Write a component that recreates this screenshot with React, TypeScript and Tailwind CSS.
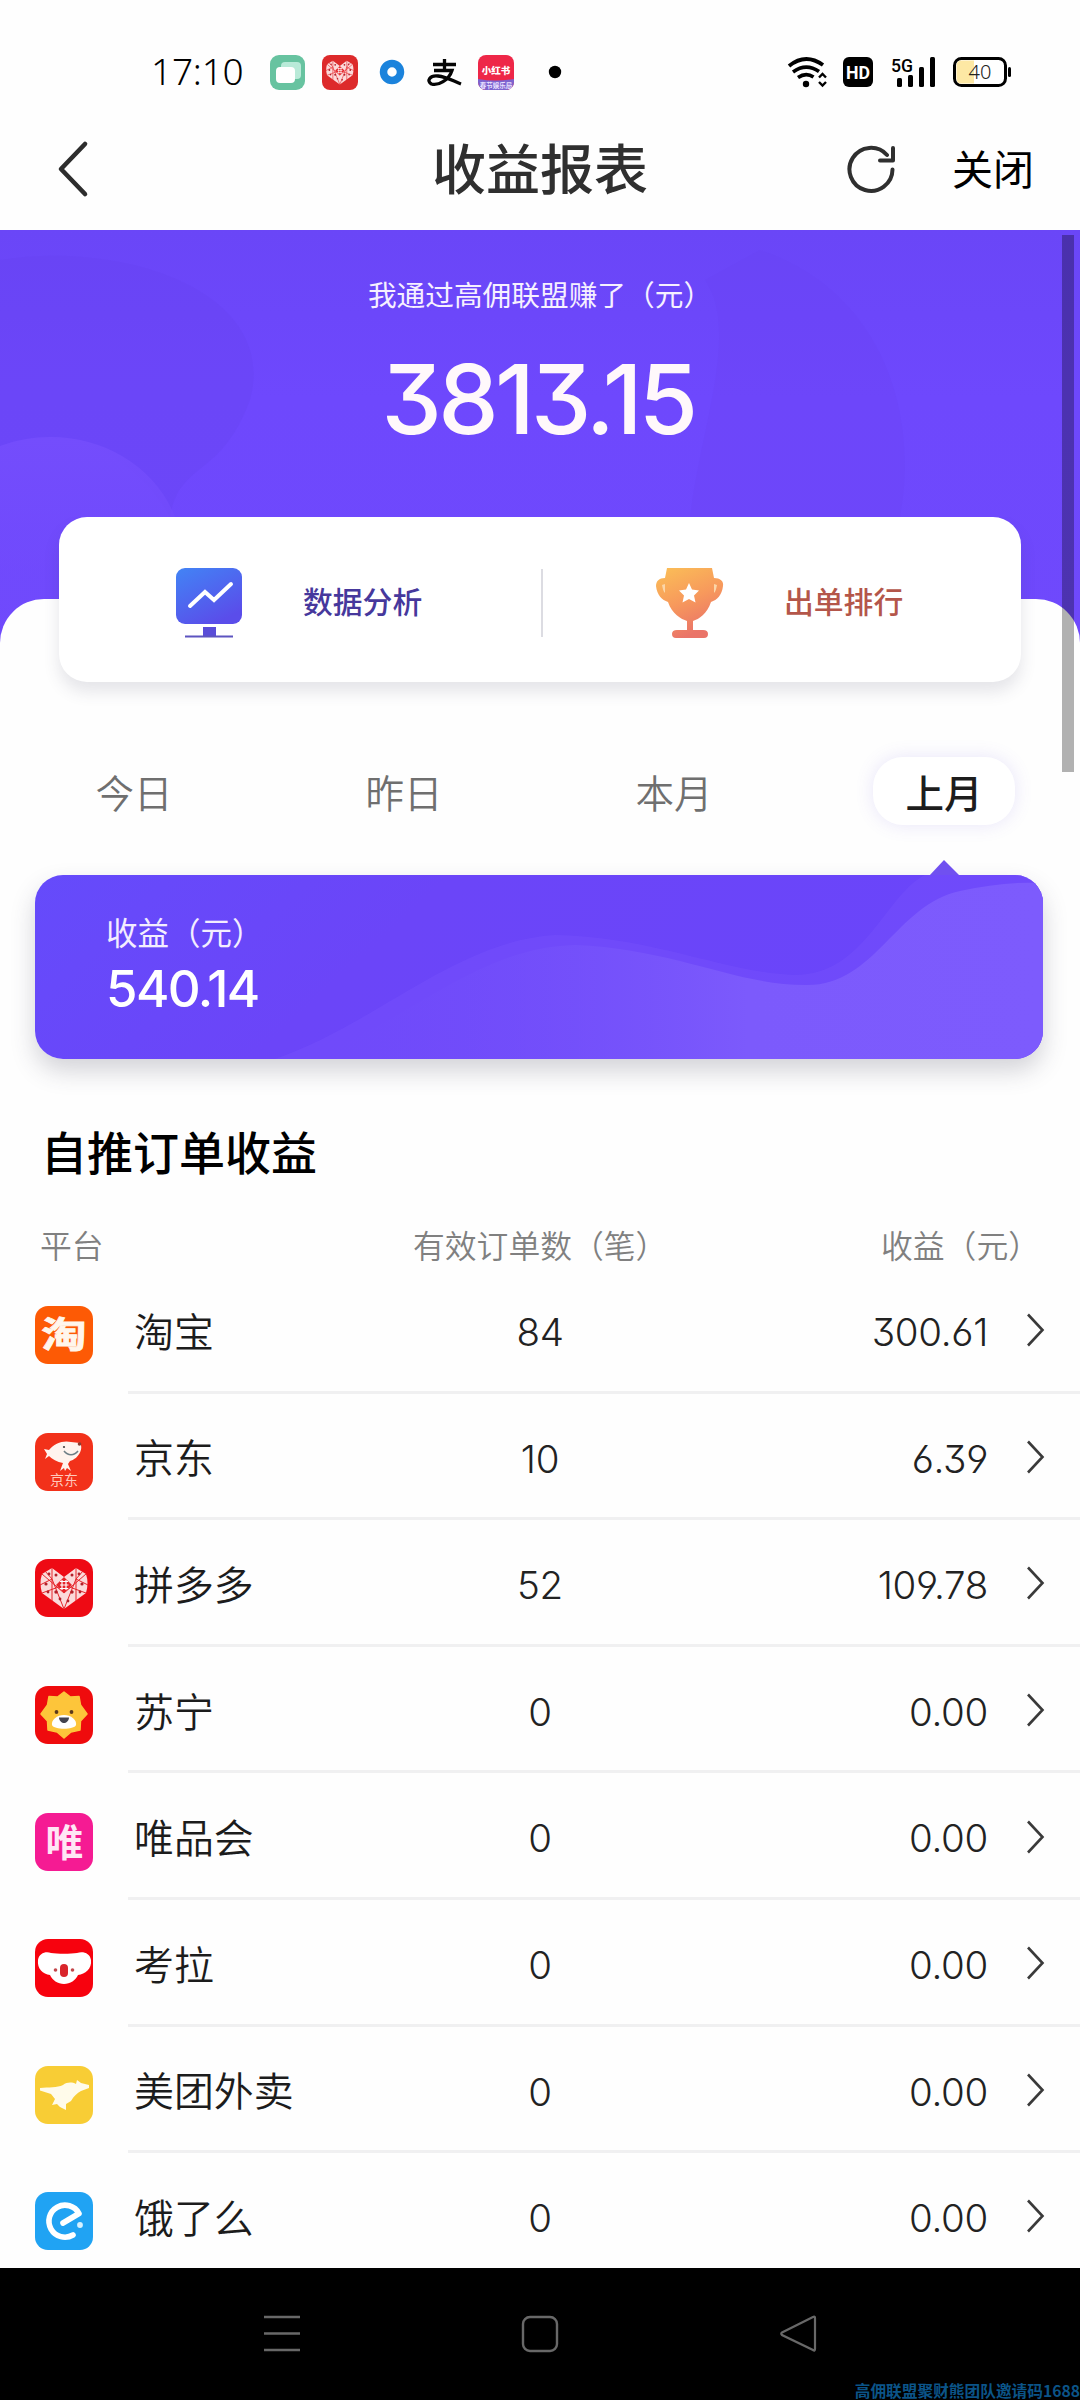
import type { ReactNode } from 'react'

interface Platform {
  name: string
  orders: string
  income: string
  icon: ReactNode
}

const NUM = "font-['Inter','Noto_Sans_CJK_SC',sans-serif] [font-feature-settings:'cv09','cv03','cv04']"

function PddHeart() {
  return (
    <g>
      <path d="M29 50 L7 34 Q4 24 7 15 L17 9 L29 18 L41 9 L51 15 Q54 24 51 34 Z" fill="#fbdada" />
      <path
        d="M7 15 L29 34 L51 15 M17 9 V42 M41 9 V42 M5 26 L17 20 L29 50 L41 20 L53 26 M7 34 L29 26 L51 34 M10 12 L17 20 M48 12 L41 20"
        stroke="#e5252a"
        strokeWidth="1"
        fill="none"
      />
      <g fill="#b3202a">
        <circle cx="11" cy="25" r="1.6" />
        <circle cx="14" cy="15" r="1.4" />
        <circle cx="21" cy="16" r="1.5" />
        <circle cx="37" cy="16" r="1.5" />
        <circle cx="44" cy="15" r="1.4" />
        <circle cx="47" cy="25" r="1.6" />
        <circle cx="13" cy="33" r="1.4" />
        <circle cx="45" cy="33" r="1.4" />
        <circle cx="21" cy="33" r="1.7" />
        <circle cx="37" cy="33" r="1.7" />
        <circle cx="25" cy="40" r="1.4" />
        <circle cx="33" cy="42" r="1.4" />
      </g>
      <path d="M29 18 L37 26 L29 34 L21 26 Z" fill="#e5252a" />
      <path d="M25 22.500 H33 M25 26 H33.500 M25 29.500 H33 M27 21 V31 M31 21 V31" stroke="#fff" strokeWidth="1.2" />
    </g>
  )
}

function AppIcon({ bg, children }: { bg: string; children: ReactNode }) {
  return (
    <svg width="58" height="58" viewBox="0 0 58 58">
      <rect width="58" height="58" rx="13" fill={bg} />
      {children}
    </svg>
  )
}

const platforms: Platform[] = [
  {
    name: '淘宝',
    orders: '84',
    income: '300.61',
    icon: (
      <AppIcon bg="#fd5a05">
        <g transform="translate(29 42) scale(1.26 1)">
          <text textAnchor="middle" fontSize="36" fontWeight="700" fill="#fff6ec" stroke="#fff6ec" strokeWidth="0.8" fontFamily="Noto Sans CJK SC, sans-serif">淘</text>
        </g>
      </AppIcon>
    ),
  },
  {
    name: '京东',
    orders: '10',
    income: '6.39',
    icon: (
      <AppIcon bg="#f2311a">
        <path d="M9 16 L14 17 C19 10 29 7 36 9 L45 10 C49 16 43 26 35 28 L33 31 L36 38 L32 35 L30 38 L29 35 L25 38 L28 30 C22 29 17 26 14 23 L10 26 L12 21 Z" fill="#fff4ee" />
        <path d="M29 18 C33 23 39 23 43 18" stroke="#6e7f86" strokeWidth="1.5" fill="none" />
        <circle cx="29" cy="14" r="1.1" fill="#444" />
        <circle cx="44.500" cy="11" r="1.8" fill="#8c3d30" />
        <text x="29" y="52" textAnchor="middle" fontSize="14" fontWeight="400" fill="#ffc9bd" fontFamily="Noto Sans CJK SC, sans-serif">京东</text>
      </AppIcon>
    ),
  },
  {
    name: '拼多多',
    orders: '52',
    income: '109.78',
    icon: (
      <AppIcon bg="#ee0a14">
        <PddHeart />
      </AppIcon>
    ),
  },
  {
    name: '苏宁',
    orders: '0',
    income: '0.00',
    icon: (
      <AppIcon bg="#ef0b0d">
        <path d="M29 6 L35.500 11 L44 10.500 L45.500 19 L52 28 L45.500 35 L45 44 L36 46 L29 52 L22 46 L13 44 L12.500 35 L6 28 L12.500 19 L14 10.500 L22.500 11 Z" fill="#fdc53a" stroke="#fdc53a" strokeWidth="1.5" strokeLinejoin="round" />
        <path d="M29 29 C36 29 42 34 41 39 C39 44 19 44 17 39 C16 34 22 29 29 29 Z" fill="#fff" />
        <circle cx="21.500" cy="26" r="1.9" fill="#5b3a1c" />
        <circle cx="36.500" cy="26" r="1.9" fill="#5b3a1c" />
        <path d="M24 31.500 H34 C34 35 31 37 29 37 C27 37 24 35 24 31.500 Z" fill="#43444f" />
      </AppIcon>
    ),
  },
  {
    name: '唯品会',
    orders: '0',
    income: '0.00',
    icon: (
      <AppIcon bg="#f51b93">
        <text x="29.500" y="43" textAnchor="middle" fontSize="37.500" fontWeight="700" fill="#ffe6f5" fontFamily="Noto Sans CJK SC, sans-serif">唯</text>
      </AppIcon>
    ),
  },
  {
    name: '考拉',
    orders: '0',
    income: '0.00',
    icon: (
      <AppIcon bg="#f7020e">
        <path d="M3 21 C4 14 11 12 16 14 C22 15 36 15 42 14 C48 12 55 14 56 21 C57 30 50 35 43 36 C41 41 35 45 29 45 C23 45 17 41 15 36 C8 35 2 30 3 21 Z" fill="#fff" />
        <rect x="25" y="25" width="8" height="13" rx="4" fill="#d9252b" />
        <circle cx="20.500" cy="31" r="1.8" fill="#c2484c" />
        <circle cx="37.500" cy="31" r="1.8" fill="#c2484c" />
      </AppIcon>
    ),
  },
  {
    name: '美团外卖',
    orders: '0',
    income: '0.00',
    icon: (
      <AppIcon bg="#f8cd35">
        <path d="M5 22 C14 21 22 22 28 19 C32 16 37 16 41 18 L42 14 L46 17 L54 19 L54 22 L46 25 C42 27 39 30 36 35 L31 38 L31 44 L25 41 L22 38 L17 39 L20 33 L16 28 L5 24.500 Z" fill="#fffbea" />
      </AppIcon>
    ),
  },
  {
    name: '饿了么',
    orders: '0',
    income: '0.00',
    icon: (
      <AppIcon bg="#20a3f3">
        <path d="M28 31 L44 21.500 A16 16 0 1 0 38 43" fill="none" stroke="#fff" strokeWidth="5.600" strokeLinecap="round" strokeLinejoin="round" />
        <circle cx="45" cy="33" r="2.900" fill="#d6f1ff" />
      </AppIcon>
    ),
  },
]

const tabs = ['今日', '昨日', '本月', '上月']

function StatusBar() {
  return (
    <div className="flex h-[94px] shrink-0 items-center pt-[50px] pl-[151px] pr-[68px]">
      <span className="mt-[-4px] w-[118px] font-['Noto_Sans'] text-[37px] font-light leading-none tracking-[-0.2px] text-black">17:10</span>
      <svg className="mt-[2px] shrink-0" width="300" height="38" viewBox="0 0 300 38">
        <rect x="1" y="1" width="35" height="35" rx="9" fill="#67c3a0" />
        <rect x="12" y="8" width="20" height="17" rx="4" fill="#b9ead8" />
        <rect x="7" y="13" width="19" height="16" rx="4" fill="#fff" />
        <rect x="53" y="1" width="36" height="35" rx="8" fill="#dd2a2b" />
        <g transform="translate(54 1.500) scale(.58)">
          <PddHeart />
        </g>
        <circle cx="123" cy="18" r="8.500" fill="none" stroke="#1b83dc" strokeWidth="7.500" />
        <path d="M164 10.500 H187 M175.500 5 V17 M165 16.500 H183 C180 26 169 32 162.500 30 C157 27 161 21 169 22 C178 23 184 27 192 30" fill="none" stroke="#050505" strokeWidth="3.300" />
        <clipPath id="xhs">
          <rect x="209" y="1" width="36" height="35" rx="8" />
        </clipPath>
        <g clipPath="url(#xhs)">
          <rect x="209" y="1" width="36" height="35" fill="#ee2748" />
          <path d="M209 25 Q227 28 245 25 V36 H209 Z" fill="#7d63cf" />
          <text x="227" y="20" textAnchor="middle" fontSize="9.500" fontWeight="900" fill="#fff" fontFamily="Noto Sans CJK SC, sans-serif">小红书</text>
          <text x="227" y="34" textAnchor="middle" fontSize="6.500" fontWeight="700" fill="#e9e0ff" fontFamily="Noto Sans CJK SC, sans-serif">春节娱乐局</text>
        </g>
        <circle cx="286" cy="18" r="6.200" fill="#000" />
      </svg>
      <svg className="ml-auto mt-[2px] shrink-0" width="226" height="36" viewBox="786 55 226 36">
        {/* wifi */}
        <path d="M789 66 Q805.500 52.500 823 65" fill="none" stroke="#000" strokeWidth="3.800" />
        <path d="M793 72 Q806 62.500 819 71.500" fill="none" stroke="#000" strokeWidth="3.600" />
        <path d="M798 77.500 Q806 72 813.500 77" fill="none" stroke="#000" strokeWidth="3.600" />
        <circle cx="806" cy="84" r="3.200" />
        <path d="M819 77.500 L822.500 74 L826 77.500 M819 82 L822.500 85.500 L826 82" fill="none" stroke="#000" strokeWidth="2.400" />
        {/* HD */}
        <rect x="843" y="57" width="30" height="30" rx="6" />
        <text x="858" y="79" textAnchor="middle" fontSize="19" fontWeight="700" fill="#fff" textLength="24" lengthAdjust="spacingAndGlyphs" fontFamily="Roboto, sans-serif">HD</text>
        {/* signal */}
        <text x="891" y="72" fontSize="19" fontWeight="500" textLength="22" lengthAdjust="spacingAndGlyphs" fontFamily="Roboto, sans-serif">5G</text>
        <rect x="897" y="78" width="5" height="9" rx="1.500" />
        <rect x="908" y="75" width="5" height="12" rx="1.500" />
        <rect x="919" y="67" width="5" height="20" rx="1.500" />
        <rect x="930" y="57" width="5" height="30" rx="1.500" />
        {/* battery */}
        <rect x="954.500" y="58.500" width="51" height="27" rx="7" fill="#fff" stroke="#000" strokeWidth="3" />
        <path d="M961 60.500 H974 V83.500 H961 Q956.500 83.500 956.500 78 V66 Q956.500 60.500 961 60.500 Z" fill="#fde8a4" />
        <rect x="1008" y="67" width="3" height="10" rx="1.500" />
        <text x="980" y="79" textAnchor="middle" fontSize="20" fontWeight="300" fontFamily="Noto Sans, sans-serif" fill="#222">40</text>
      </svg>
    </div>
  )
}

function NavHeader() {
  return (
    <div className="grid h-[136px] shrink-0 grid-cols-3 items-center">
      <svg className="ml-[56px] mt-[14px]" width="34" height="58" viewBox="0 0 34 58">
        <path d="M29 4 L5 29 L29 54" fill="none" stroke="#2d2d2d" strokeWidth="4.600" strokeLinecap="round" strokeLinejoin="round" />
      </svg>
      <h1 className="mt-[9px] text-center text-[54px] font-medium leading-none text-[#2f2f2f]">收益报表</h1>
      <div className="mt-[10px] flex items-center justify-end gap-[56px] pr-[46px]">
        <svg className="mt-[4px]" width="50" height="50" viewBox="0 0 50 50">
          <path d="M46.500 25.500 A21.500 21.500 0 1 1 41 11" fill="none" stroke="#2f2f2f" strokeWidth="4" strokeLinecap="round" />
          <path d="M47 4 V16.500 H34" fill="none" stroke="#2f2f2f" strokeWidth="4" strokeLinecap="round" strokeLinejoin="round" />
        </svg>
        <span className="text-[41px] leading-none text-black">关闭</span>
      </div>
    </div>
  )
}

function Hero() {
  return (
    <div className="relative h-[287px] shrink-0 text-center">
      <svg className="absolute left-0 top-0" width="1080" height="420" viewBox="0 0 1080 420">
        <defs>
          <linearGradient id="hero" x1="0" y1="0" x2="0" y2="1">
            <stop offset="0" stopColor="#6a46f7" />
            <stop offset="0.4" stopColor="#6e48fd" />
            <stop offset="1" stopColor="#6f49fc" />
          </linearGradient>
          <linearGradient id="blob" x1="0" y1="0" x2="0" y2="1">
            <stop offset="0" stopColor="#744dfc" />
            <stop offset="1" stopColor="#704afc" stopOpacity="0.2" />
          </linearGradient>
        </defs>
        <rect width="1080" height="420" fill="url(#hero)" />
        <path d="M0 30 C120 10 280 60 250 170 C220 250 180 230 170 287 C140 230 70 190 0 216 Z" fill="#6742f0" opacity="0.3" />
        <path d="M0 216 C70 190 150 222 175 287 L175 420 H0 Z" fill="url(#blob)" />
        <path d="M705 50 C740 100 700 200 690 287 L900 287 C920 180 880 60 760 20 Z" fill="#6742ee" opacity="0.2" />
      </svg>
      <div className="relative">
        <p className="pt-[48px] text-[28.7px] leading-[32px] text-[#f6f0ff]">我通过高佣联盟赚了（元）</p>
        <p className={`${NUM} -ml-[4px] mt-[41px] text-[96px] font-medium leading-[96px] tracking-[-3.7px] text-[#fff8fb]`}>3813.15</p>
      </div>
    </div>
  )
}

function QuickLinks() {
  return (
    <div className="relative z-10 mx-[59px] flex h-[165px] items-center rounded-[28px] bg-white shadow-[0_10px_16px_rgba(60,60,90,0.13)]">
      <div className="flex w-[482px] items-center pl-[117px]">
        <svg className="mt-[6px]" width="66" height="70" viewBox="0 0 66 70">
          <defs>
            <linearGradient id="mon" x1="0" y1="0" x2="0.6" y2="1">
              <stop offset="0" stopColor="#4284f5" />
              <stop offset="1" stopColor="#5a4dea" />
            </linearGradient>
          </defs>
          <rect width="66" height="56" rx="9" fill="url(#mon)" />
          <path d="M14 38 L29 24 L38 32 L55 16" fill="none" stroke="#fff" strokeWidth="4" strokeLinecap="round" />
          <rect x="27" y="59" width="13" height="9" fill="#5a4dd8" />
          <rect x="9" y="67.500" width="48" height="2" fill="#5d54c0" />
        </svg>
        <span className="ml-[61px] mt-[2px] text-[29.8px] font-medium leading-none text-[#46389c]">数据分析</span>
      </div>
      <div className="mt-[6px] h-[68px] w-[2px] bg-[#dcdce2]" />
      <div className="flex items-center pl-[113px]">
        <svg className="mt-[6px]" width="68" height="70" viewBox="0 0 68 70">
          <defs>
            <linearGradient id="cup" x1="0" y1="0" x2="0.4" y2="1">
              <stop offset="0" stopColor="#fbc057" />
              <stop offset="0.55" stopColor="#f7995c" />
              <stop offset="1" stopColor="#ea7468" />
            </linearGradient>
          </defs>
          <path d="M11 0 H56 L58 10 C64 10 68 13 67 18 C66 27 61 32 55 34 C51 46 43 51 37 53 V62 H47 Q52 62 52 66 Q52 70 48 70 H20 Q16 70 16 66 Q16 62 21 62 H31 V53 C25 51 16 46 12 34 C6 32 1 27 0 18 C0 13 3 10 9 10 Z" fill="url(#cup)" />
          <path d="M6 17 C7 21 7 23 9 25 L9 16 Z M61 17 C60 21 60 23 58 25 L58 16 Z" fill="#fbd6a8" />
          <path d="M33 15 L36 21.500 L43 22.500 L38 27.500 L39.500 34.500 L33 31 L26.500 34.500 L28 27.500 L23 22.500 L30 21.500 Z" fill="#fff" />
        </svg>
        <span className="ml-[60px] mt-[2px] text-[29.8px] font-medium leading-none text-[#b4564a]">出单排行</span>
      </div>
    </div>
  )
}

function Tabs() {
  return (
    <div className="mr-[1px] -ml-[1px] mt-[75px] grid h-[68px] grid-cols-4">
      {tabs.map((tab) => (
        <div key={tab} className="flex items-center justify-center">
          {tab === '上月' ? (
            <span className="flex h-[68px] w-[142px] items-center justify-center rounded-[30px] bg-white text-[38.5px] font-medium leading-none text-[#1d1d1d] shadow-[0_0_18px_rgba(110,90,220,0.15)]">
              {tab}
            </span>
          ) : (
            <span className="text-[38.5px] font-[350] leading-none text-[#6f6f6f]">{tab}</span>
          )}
        </div>
      ))}
    </div>
  )
}

function IncomeCard() {
  return (
    <div className="relative ml-[35px] mt-[50px] h-[184px] w-[1008px] rounded-[28px] shadow-[0_12px_24px_rgba(60,60,80,0.22)]">
      <svg className="absolute left-0 top-[-16px]" width="1008" height="200" viewBox="0 -16 1008 200">
        <defs>
          <linearGradient id="inc" x1="0" y1="0" x2="1" y2="0.2">
            <stop offset="0" stopColor="#654bfb" />
            <stop offset="0.4" stopColor="#6b45f8" />
            <stop offset="1" stopColor="#6a45fa" />
          </linearGradient>
          <linearGradient id="wave" x1="0" y1="0" x2="1" y2="0">
            <stop offset="0" stopColor="#6e4afa" stopOpacity="0" />
            <stop offset="0.6" stopColor="#7c5afc" />
            <stop offset="1" stopColor="#7d5bfd" />
          </linearGradient>
          <clipPath id="card">
            <rect width="1008" height="184" rx="28" />
          </clipPath>
        </defs>
        <path d="M894 1 L909 -15 L925 1 Z" fill="#7050f0" />
        <g clipPath="url(#card)">
          <rect width="1008" height="184" fill="url(#inc)" />
          <path d="M240 184 C340 150 420 66 520 60 C620 62 690 98 760 100 C830 100 850 20 890 0 H1008 V184 Z" fill="#724dfb" opacity="0.7" />
          <path d="M270 184 C370 150 440 72 540 70 C640 74 700 110 770 110 C840 112 860 30 925 16 Q970 6 1008 8 V184 Z" fill="url(#wave)" />
        </g>
      </svg>
      <div className="relative pl-[71px] pt-[40px]">
        <p className="text-[31.5px] leading-[32px] text-[#f3edff]">收益（元）</p>
        <p className={`${NUM} mt-[16px] text-[51px] font-medium leading-[51px] tracking-[-1.6px] text-white`}>540.14</p>
      </div>
    </div>
  )
}

function PlatformRow({ name, orders, income, icon }: Platform) {
  return (
    <div className="relative flex h-[126.6px] shrink-0 items-center">
      <div className="ml-[35px] mt-[10px]">{icon}</div>
      <div className="ml-[35px] flex h-full flex-1 items-center border-b-[3px] border-[#f0f0f1] pl-[6px]">
        <span className="mt-[2px] w-[306px] text-[39.9px] font-[350] leading-none text-[#1c1c1c]">{name}</span>
        <span className={`${NUM} mt-[7px] w-[200px] text-center text-[38.5px] font-[350] leading-none tracking-[-0.3px] text-[#222]`}>{orders}</span>
        <span className={`${NUM} mt-[7px] w-[348px] text-right text-[38.5px] font-[350] leading-none tracking-[-0.3px] text-[#222]`}>{income}</span>
        <svg className="ml-[36px] mt-[3px]" width="22" height="36" viewBox="0 0 22 36">
          <path d="M4 2.500 L18.500 18 L4 33.500" fill="none" stroke="#3a3a3a" strokeWidth="2.600" />
        </svg>
      </div>
    </div>
  )
}

export default function App() {
  return (
    <div className="relative flex h-[2400px] w-[1080px] flex-col overflow-hidden bg-[#fefefe] font-['Noto_Sans_CJK_SC',sans-serif]">
      <StatusBar />
      <NavHeader />
      <Hero />

      <div className="relative h-[1751px] shrink-0 overflow-hidden">
        {/* rounded sheet that slides up under the quick links */}
        <div className="absolute inset-x-0 bottom-0 top-[82px] rounded-t-[44px] bg-[#fefefe]" />
        <div className="relative">
          <QuickLinks />
          <Tabs />
          <IncomeCard />
          <h2 className="ml-[41px] mt-[65px] text-[46px] font-medium leading-[52px] text-black">自推订单收益</h2>
          <div className="mt-[49px] flex h-[39px] items-center px-[40px] text-[31.8px] font-[350] leading-none text-[#808080]">
            <span className="w-[373px]">平台</span>
            <span>有效订单数（笔）</span>
            <span className="ml-auto">收益（元）</span>
          </div>
          <div className="pt-[3px]">
            {platforms.map((p) => (
              <PlatformRow key={p.name} {...p} />
            ))}
          </div>
        </div>
      </div>

      {/* System navigation */}
      <div className="relative flex h-[132px] shrink-0 items-center justify-between bg-black px-[263px]">
        <svg width="38" height="38" viewBox="0 0 38 38">
          <path d="M1 2 H37 M1 18.500 H37 M1 35 H37" stroke="#686868" strokeWidth="2.600" />
        </svg>
        <svg width="38" height="38" viewBox="0 0 38 38">
          <rect x="2" y="2" width="34" height="34" rx="7" fill="none" stroke="#686868" strokeWidth="2.400" />
        </svg>
        <svg width="38" height="38" viewBox="0 0 38 38">
          <path d="M34 2 Q36 1 36 3 V34 Q36 36.500 34 35 L3 20 Q1.500 18.500 3 17.500 Z" fill="none" stroke="#686868" strokeWidth="2.200" />
        </svg>
        <span className="absolute bottom-0 right-0 whitespace-nowrap text-[15.7px] font-bold leading-[18px] text-[#0b5488]">高佣联盟聚财熊团队邀请码1688</span>
      </div>

      {/* scrollbar */}
      <div className="absolute left-[1062px] top-[235px] z-20 h-[537px] w-[12px] bg-black/30" />
    </div>
  )
}
